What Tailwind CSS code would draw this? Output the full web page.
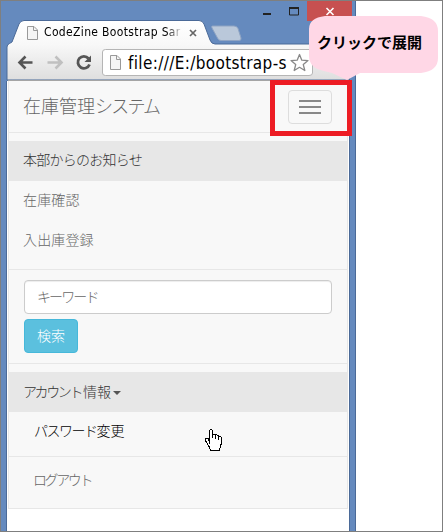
<!DOCTYPE html>
<html lang="ja">
<head>
<meta charset="utf-8">
<title>CodeZine Bootstrap Sample</title>
<script src="https://cdn.jsdelivr.net/npm/@tailwindcss/browser@4"></script>
</head>
<body class="bg-white">
<div class="relative flex w-[443px] h-[532px] overflow-hidden border border-[#7f7f7f] bg-white font-['Liberation_Sans','Noto_Sans_CJK_JP',sans-serif]">
  <!-- browser window -->
  <div class="relative flex flex-col w-[355px] h-[530px] shrink-0 bg-[#658abe] border-r border-[#4b6a98]">
    <svg class="absolute left-0 top-0" width="355" height="80" viewBox="1 1 355 80">
      <defs>
        <linearGradient id="bar" x1="0" y1="21" x2="0" y2="80" gradientUnits="userSpaceOnUse"><stop offset="0" stop-color="#fff"/><stop offset=".4" stop-color="#f8f8f8"/><stop offset="1" stop-color="#dedede"/></linearGradient>
      </defs>
      <path d="M7 80V47Q7 44.500 9.500 43.500L12 42L19 24Q20.500 20.500 24 20.500H199Q202.500 20.500 204 24L210 40Q211.500 44 215 44H349.500V80Z" fill="url(#bar)" stroke="#4b6a98"/>
      <path d="M212.500 26H234Q237 26 238 28.500L241 38Q241.500 40.500 239 40.500H221Q218.500 40.500 217.500 38L212 28Q211 26 212.500 26Z" fill="#bac8da" stroke="#8fa4c3"/>
      <path d="M8 80.500H349" stroke="#a5a5a5"/>
      <path d="M263 14H271" stroke="#222" stroke-width="2"/>
      <path d="M289.500 8V15H298.500V8" fill="none" stroke="#222"/><path d="M289 8H299" stroke="#222" stroke-width="2"/>
      <path d="M307 1H352V21H307Z" fill="#c75050"/>
      <path d="M326.500 8L333.500 15M333.500 8L326.500 15" stroke="#fff" stroke-width="1.600"/>
      <path d="M27.500 26.500H34L37.500 30V39.500H27.500Z" fill="#f5f5f5" stroke="#999"/><path d="M33.500 27V30.500H37" fill="none" stroke="#999"/>
      <path d="M190 30L196 36M196 30L190 36" stroke="#666" stroke-width="1.700"/>
      <path d="M32.500 62.500H20M25.500 56.500L19.500 62.500L25.500 68.500" fill="none" stroke="#555" stroke-width="2.600"/>
      <path d="M47.500 62.500H60M55.500 56.500L61.500 62.500L55.500 68.500" fill="none" stroke="#c0c0c0" stroke-width="2.600"/>
      <path d="M88.500 58.500A6 6 0 1 0 89.500 64.500" fill="none" stroke="#555" stroke-width="2.800"/><path d="M91 55.500V62H84.500Z" fill="#555"/>
      <path d="M105.500 49.500H309Q312.500 49.500 312.500 52V73Q312.500 75.500 309 75.500H105.500Q102.500 75.500 102.500 73V52Q102.500 49.500 105.500 49.500Z" fill="#fff" stroke="#b5b5b5"/>
      <path d="M110.500 55.500H117L120.500 59V69.500H110.500Z" fill="#f5f5f5" stroke="#999"/><path d="M116.500 56V59.500H120" fill="none" stroke="#999"/>
      <path d="M299.500 54.500L301.800 60.200L308 60.600L303.300 64.600L304.800 70.500L299.500 67.300L294.200 70.500L295.700 64.600L291 60.600L297.200 60.200Z" fill="#fff" stroke="#888" stroke-width="1.300" stroke-linejoin="round"/>
    </svg>
    <div class="relative h-[80px] shrink-0 text-black whitespace-nowrap">
      <div class="absolute left-[43px] top-[22px] w-[139px] text-[12px] leading-[18px] font-['DejaVu_Sans_Condensed','DejaVu_Sans',sans-serif] [font-stretch:condensed] tracking-[0.35px] [mask-image:linear-gradient(90deg,black_88%,transparent)]">CodeZine Bootstrap Sar</div>
      <div class="absolute left-[127px] top-[49px] w-[162px] text-[17px] leading-[26px] font-['DejaVu_Sans_Condensed','DejaVu_Sans',sans-serif] [font-stretch:condensed] tracking-[0.350px]">file:///E:/bootstrap-s</div>
    </div>
    <!-- page -->
    <div class="flex flex-col flex-1 ml-[5px] mr-[5px] border-l border-r border-[#4b6a98] bg-white text-[14px] text-[#666] font-light">
      <nav class="flex flex-col h-[428px] mx-px bg-[#f8f8f8] border-l border-r border-b border-[#e7e7e7] whitespace-nowrap">
        <div class="flex justify-between h-[52px] border-b border-[#e7e7e7] pl-[14px] pr-[15px] shrink-0">
          <div class="text-[18px] leading-[52px]">在庫管理<span class="tracking-[-1.8px]">システム</span></div>
          <button aria-label="メニュー" class="flex flex-col items-center justify-center gap-[4px] mt-[9px] w-[44px] h-[34px] rounded-[4px] border border-[#ddd]">
            <span class="w-[22px] h-[2px] bg-[#888]"></span><span class="w-[22px] h-[2px] bg-[#888]"></span><span class="w-[22px] h-[2px] bg-[#888]"></span>
          </button>
        </div>
        <div class="flex flex-col pt-[8px] h-[137px] border-b border-[#e7e7e7] leading-[39px] shrink-0">
          <a class="h-[40px] pl-[14px] bg-[#e7e7e7] text-[#333] tracking-[-0.75px]">本部からのお知らせ</a>
          <a class="h-[40px] pl-[14px] tracking-[0.15px]">在庫確認</a>
          <a class="h-[40px] pl-[14px] tracking-[0.15px]">入出庫登録</a>
        </div>
        <form class="flex flex-col items-start gap-[5px] pt-[10px] px-[15px] h-[94px] border-b border-[#e7e7e7] shrink-0">
          <div class="w-full h-[34px] rounded-[4px] border border-[#ccc] bg-white shadow-[inset_0_1px_1px_rgba(0,0,0,0.075)] pl-[12px] leading-[32px] tracking-[-1.9px]">キーワード</div>
          <button type="button" class="w-[54px] h-[34px] rounded-[4px] border border-[#46b8da] bg-[#5bc0de] text-white leading-[32px] font-light">検索</button>
        </form>
        <div class="flex flex-col pt-[8px]">
          <div class="flex items-center h-[40px] pl-[14px] bg-[#e7e7e7] text-[#333]"><span class="tracking-[-2.4px]">アカウント</span><span class="ml-[2px]">情報</span><span class="ml-[2px] mt-[2px] border-x-[4px] border-t-[4px] border-x-transparent border-t-[#555]"></span></div>
          <a class="h-[45px] pl-[25px] leading-[39px] text-black border-b border-[#e7e7e7]"><span class="tracking-[-1.5px]">パスワード</span>変更</a>
          <a class="pl-[24px] leading-[47px] tracking-[-2.4px]">ログアウト</a>
        </div>
      </nav>
    </div>
  </div>
  <!-- highlight, callout and pointer above the window -->
  <div class="absolute left-[269px] top-[79px] w-[82px] h-[56px] border-[5px] border-[#ed1c24]"></div>
  <svg class="absolute left-[307px] top-[14px]" width="133" height="67" viewBox="308 15 133 67"><path d="M325 16H421Q438 18 438 31V58Q438 71 421 73H360L347 80L332 73L324 71Q309 68 309 56V29Q309 18 325 16Z" fill="#ffd7e6"/></svg>
  <div class="absolute left-[316px] top-[31px] text-[15px] leading-[22px] font-bold text-black whitespace-nowrap">クリックで展開</div>
  <svg class="absolute left-[203px] top-[427px]" width="20" height="24" viewBox="204 428 20 24" shape-rendering="crispEdges"><path d="M209.500 443.500V430.500Q210.500 428.500 212.500 430.500V434.500L215.500 434.500L218.500 435.500L221.500 437.500V443.500L220.500 445.500L219.500 450.500H210.500L209.500 447.500L205.500 440.500V438.500H208.500Z" fill="#fff" stroke="#000"/><path d="M212.500 434V438M215.500 435V439M218.500 436V440" stroke="#000"/></svg>
</div>
</body>
</html>
